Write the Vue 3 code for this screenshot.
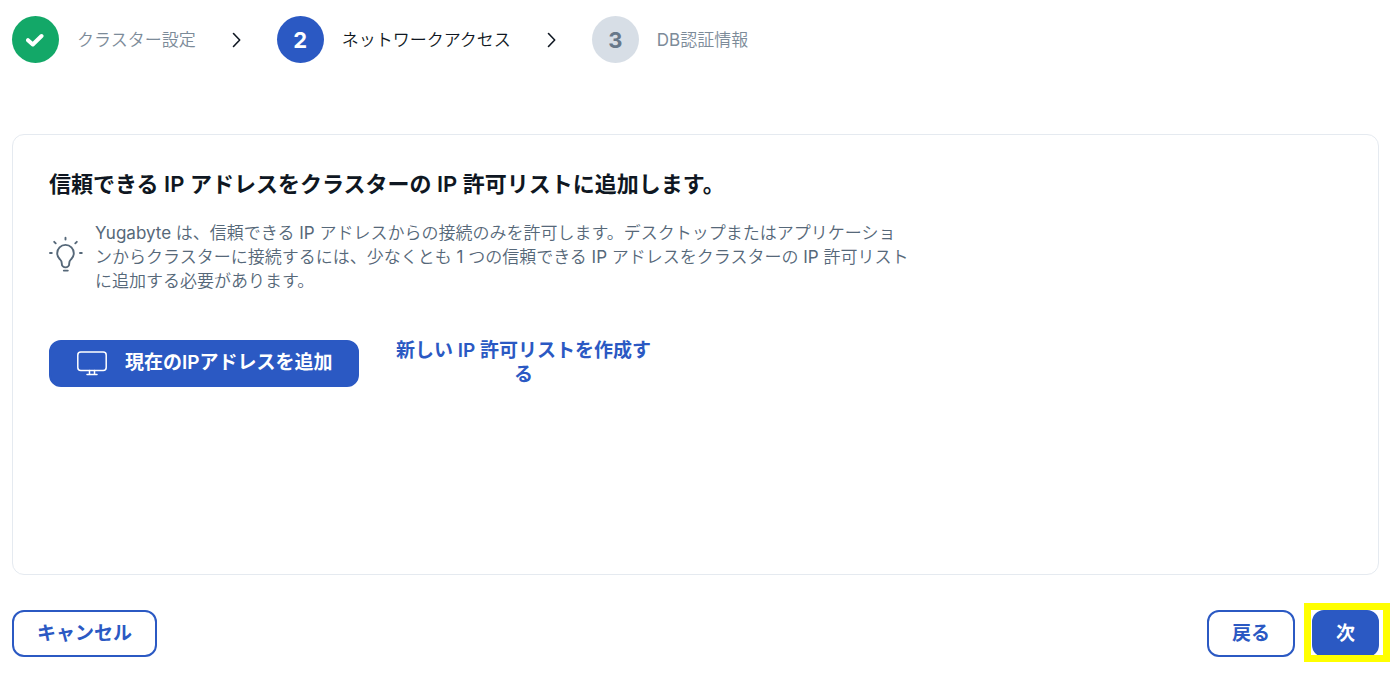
<script setup>
const steps = [
  { id: 1, label: 'クラスター設定', state: 'done' },
  { id: 2, label: 'ネットワークアクセス', state: 'active' },
  { id: 3, label: 'DB認証情報', state: 'pending' }
]
</script>

<template>
  <main class="wizard">
    <ol class="steps">
      <li v-for="(step, i) in steps" :key="step.id" class="step" :class="step.state">
        <svg v-if="i > 0" class="chevron" viewBox="0 0 10 16" aria-hidden="true">
          <path d="M1.5 1.5 L7.7 8 L1.5 14.5" />
        </svg>
        <span class="circle">
          <svg v-if="step.state === 'done'" class="check" viewBox="0 0 20 16" aria-hidden="true">
            <path d="M2 8.2 L6.8 12.5 L15.5 4" />
          </svg>
          <template v-else>{{ step.id }}</template>
        </span>
        <span class="label">{{ step.label }}</span>
      </li>
    </ol>

    <section class="card">
      <h1>信頼できる IP アドレスをクラスターの IP 許可リストに追加します。</h1>
      <div class="hint">
        <svg class="bulb" viewBox="0 0 34 36" aria-hidden="true">
          <path d="M16.5 1.8v1.8M5.2 5.8l1.5 1.5M27.8 5.8l-1.5 1.5M1 17h1.8M31 17h1.8M14.8 34.6h4" />
          <path d="M12.8 27.5C12.8 25 12 24.4 10.8 23.2A8.3 8.3 0 1 1 22.2 23.2C21 24.4 20.2 25 20.2 27.5V28A3.7 3.4 0 0 1 12.8 28Z" />
        </svg>
        <p>Yugabyte は、信頼できる IP アドレスからの接続のみを許可します。デスクトップまたはアプリケーションからクラスターに接続するには、少なくとも 1 つの信頼できる IP アドレスをクラスターの IP 許可リストに追加する必要があります。</p>
      </div>
      <div class="choices">
        <button type="button" class="btn primary add">
          <svg class="monitor" viewBox="0 0 30 25" aria-hidden="true">
            <rect x="0.8" y="1" width="28.4" height="18.6" rx="3" />
            <path d="M12.5 19.6v4M17.5 19.6v4M10 23.6h10" />
          </svg>
          <span>現在のIPアドレスを追加</span>
        </button>
        <button type="button" class="create">新しい IP 許可リストを作成する</button>
      </div>
    </section>

    <footer class="actions">
      <button type="button" class="btn outline">キャンセル</button>
      <div class="forward">
        <button type="button" class="btn outline">戻る</button>
        <div class="next">
          <button type="button" class="btn primary">次</button>
          <span class="highlight"></span>
        </div>
      </div>
    </footer>
  </main>
</template>

<style>
body {
  background: #fff;
}
</style>

<style scoped>
.wizard {
  padding: 16px 21px 18px 12px;
  font-family: Inter, "Noto Sans CJK JP", sans-serif;
  color: #0f1722;
}
svg {
  fill: none;
  stroke: currentColor;
  stroke-linecap: round;
  stroke-linejoin: round;
  flex: none;
}
.steps {
  display: flex;
  margin: 0;
  padding: 0;
  list-style: none;
}
.step {
  display: flex;
  align-items: center;
}
.chevron {
  width: 10px;
  height: 16px;
  margin: 0 35px 0 36px;
  color: #0f1722;
  stroke-width: 1.6;
}
.circle {
  display: flex;
  align-items: center;
  justify-content: center;
  width: 47px;
  height: 47px;
  margin-right: 18px;
  border-radius: 50%;
  font-size: 22px;
  font-weight: 700;
  color: #fff;
  background: #2b59c3;
}
.done .circle {
  background: #13a868;
}
.pending .circle {
  color: #67788a;
  background: #d7dee6;
}
.check {
  width: 20px;
  height: 16px;
  stroke-width: 4;
}
.label {
  font-family: Inter, "Noto Sans CJK JP DemiLight", "Noto Sans CJK JP", sans-serif;
  font-size: 17px;
  line-height: 24px;
}
.done .label,
.pending .label {
  color: #7c8b99;
}
.card {
  box-sizing: border-box;
  min-height: 441px;
  margin-top: 71px;
  padding: 32px 36px;
  border: 1px solid #e5eaf0;
  border-radius: 12px;
}
h1 {
  margin: 0;
  font-size: 22px;
  line-height: 34px;
  font-weight: 600;
}
.hint {
  display: flex;
  align-items: flex-start;
  gap: 12px;
  max-width: 861px;
  margin-top: 20px;
  color: #566879;
}
.bulb {
  width: 34px;
  height: 36px;
  margin-top: 15px;
  stroke-width: 1.9;
}
.hint p {
  margin: 0;
  font-family: Inter, "Noto Sans CJK JP DemiLight", "Noto Sans CJK JP", sans-serif;
  font-size: 17px;
  line-height: 24px;
}
.choices {
  display: flex;
  align-items: center;
  gap: 35px;
  margin-top: 46px;
}
.btn {
  box-sizing: border-box;
  height: 47px;
  padding: 0 22px;
  border: 2px solid #2b59c3;
  border-radius: 12px;
  font: 600 19px/24px Inter, "Noto Sans CJK JP", sans-serif;
  white-space: nowrap;
}
.primary {
  color: #fff;
  background: #2b59c3;
}
.outline {
  padding: 0 23px;
  color: #2b59c3;
  background: #fff;
}
.add {
  display: flex;
  align-items: center;
  gap: 18px;
  padding: 0 24px 0 26px;
}
.monitor {
  width: 30px;
  height: 25px;
  stroke-width: 1.5;
}
.create {
  width: 260px;
  padding: 0;
  border: 0;
  background: none;
  color: #2b59c3;
  font: 600 19px/24px Inter, "Noto Sans CJK JP", sans-serif;
  text-align: center;
}
.actions {
  display: flex;
  justify-content: space-between;
  margin-top: 35px;
}
.forward {
  display: flex;
  gap: 17px;
}
.next {
  position: relative;
}
.highlight {
  position: absolute;
  inset: -7px -11px -5px -8px;
  border: 7px solid #ff0;
  pointer-events: none;
}
</style>
